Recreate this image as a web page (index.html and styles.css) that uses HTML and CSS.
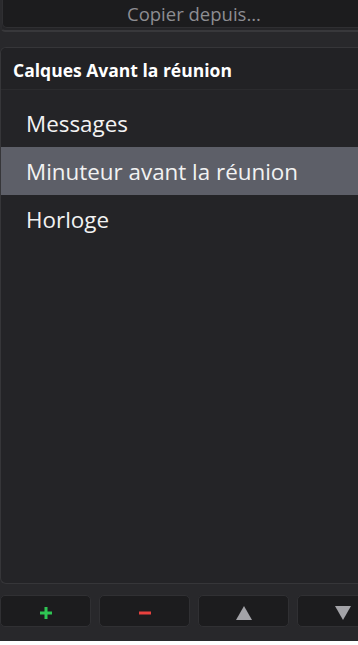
FILE: index.html
```html
<!DOCTYPE html>
<html lang="fr">
<head>
<meta charset="utf-8">
<link rel="stylesheet" href="styles.css">
</head>
<body>
<div class="app">
  <div class="top-group">
    <button class="copy-btn">Copier depuis...</button>
  </div>
  <section class="layers">
    <div class="layers-header">Calques Avant la réunion</div>
    <ul class="layer-list">
      <li class="layer">Messages</li>
      <li class="layer selected">Minuteur avant la réunion</li>
      <li class="layer">Horloge</li>
    </ul>
  </section>
  <div class="toolbar">
    <button class="tool-btn add"><svg width="14" height="14" viewBox="0 0 14 14"><rect x="5.5" y="1" width="3" height="12" fill="#2ec553"/><rect x="1" y="5.5" width="12" height="3" fill="#2ec553"/></svg></button>
    <button class="tool-btn remove"><svg width="12" height="4" viewBox="0 0 12 4"><rect x="0" y="0.5" width="12" height="3" fill="#e8413e"/></svg></button>
    <button class="tool-btn up"><svg width="16" height="14" viewBox="0 0 16 14"><polygon points="8,0 16,14 0,14" fill="#a3a3a8"/></svg></button>
    <button class="tool-btn down"><svg width="16" height="14" viewBox="0 0 16 14"><polygon points="0,0 16,0 8,14" fill="#a3a3a8"/></svg></button>
  </div>
</div>
</body>
</html>
```
FILE: styles.css
```css
html, body {
  margin: 0;
  padding: 0;
  background: #ffffff;
  overflow: hidden;
}
.app {
  width: 386px;
  height: 641px;
  background: #28282b;
  display: flex;
  flex-direction: column;
  font-family: "Open Sans", "Noto Sans", sans-serif;
}
.top-group {
  border-left: 2px solid #2a2a2d;
  border-bottom: 2px solid #38383b;
  border-bottom-left-radius: 5px;
  padding-bottom: 2px;
  background: #252528;
}
.copy-btn {
  display: block;
  width: 100%;
  height: 28px;
  margin: 0;
  background: #1c1c1e;
  border: 1px solid #2f2f32;
  border-top: none;
  border-bottom-left-radius: 5px;
  color: #8d8d92;
  font-family: inherit;
  font-size: 18.5px;
  line-height: 25px;
  padding: 0;
  text-align: center;
}
.layers {
  margin-top: 15px;
  height: 537px;
  box-sizing: border-box;
  border: 1px solid #363639;
  border-right: none;
  border-radius: 6px 0 0 6px;
  background: #242427;
  display: flex;
  flex-direction: column;
  overflow: hidden;
}
.layers-header {
  height: 41px;
  background: #222225;
  border-bottom: 1px solid #2b2b2e;
  color: #ffffff;
  font-weight: 700;
  font-size: 17.5px;
  padding-left: 12px;
  line-height: 44px;
}
.layer-list {
  list-style: none;
  margin: 0;
  padding: 9px 0 0;
}
.layer {
  height: 48px;
  line-height: 49px;
  padding-left: 25px;
  color: #f2f2f2;
  font-size: 22.4px;
}
.layer.selected {
  background: #5d5f68;
}
.toolbar {
  display: flex;
  gap: 8px;
  margin-top: 11px;
}
.tool-btn {
  flex: 0 0 91px;
  height: 32px;
  box-sizing: border-box;
  background: #1c1c1e;
  border: 1px solid #303033;
  border-radius: 5px;
  display: flex;
  align-items: center;
  justify-content: center;
  padding: 0;
  margin: 0;
}
.tool-btn svg { margin-top: 3px; }
.tool-btn.add svg, .tool-btn.remove svg { margin-left: 1px; }
```
